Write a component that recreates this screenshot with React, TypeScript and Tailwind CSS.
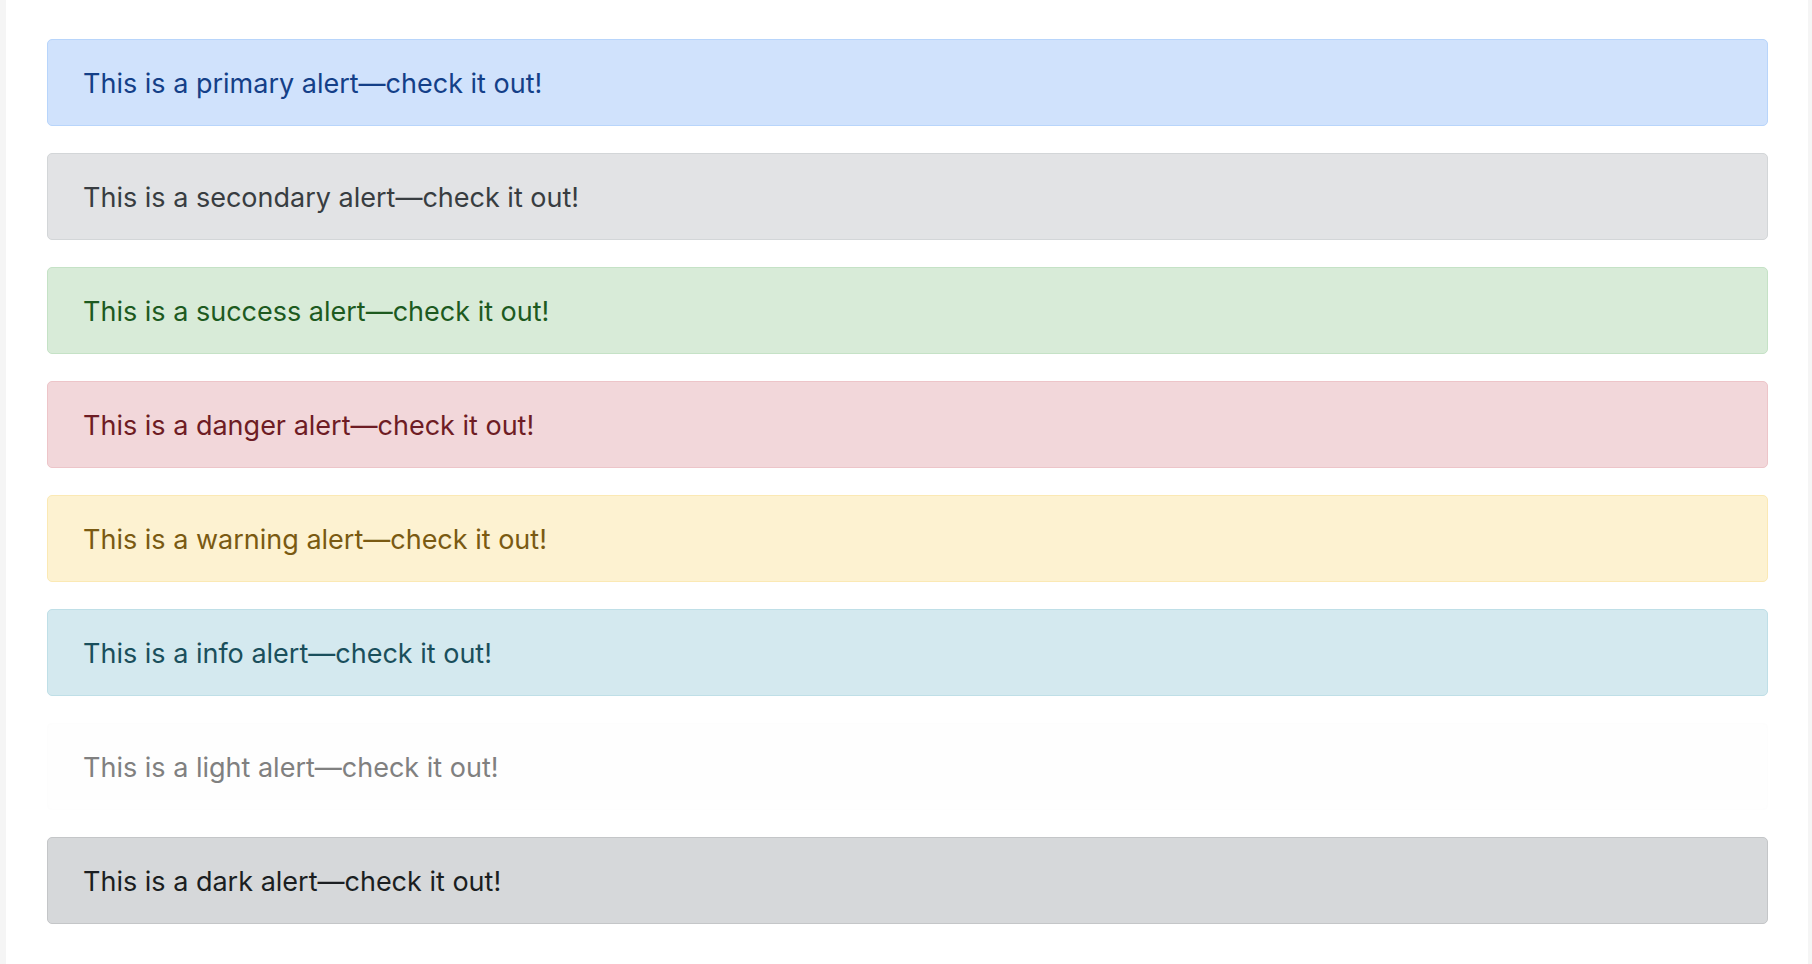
import React from "react";

const alerts = [
  { name: "primary", cls: "bg-[#d0e2fc] border-[#b8d5fb] text-[#143f88]" },
  { name: "secondary", cls: "bg-[#e2e3e5] border-[#d3d6d8] text-[#383d41]" },
  { name: "success", cls: "bg-[#d8ebd8] border-[#c5e2c6] text-[#1d5a1f]" },
  { name: "danger", cls: "bg-[#f2d7da] border-[#edc5c9] text-[#6e1c24]" },
  { name: "warning", cls: "bg-[#fdf2d1] border-[#fbe9b4] text-[#7a5a12]" },
  { name: "info", cls: "bg-[#d4e9ef] border-[#bfdfe7] text-[#1a4f5c]" },
  { name: "light", cls: "bg-[#fefefe] border-[#fdfdfd] text-[#808080]" },
  { name: "dark", cls: "bg-[#d6d8da] border-[#c4c6c8] text-[#1b1e21]" },
];

export default function App() {
  return (
    <div className="flex min-h-[964px] w-full bg-white" style={{ fontFamily: "Inter, 'Noto Sans', sans-serif" }}>
      <div className="w-[6px] shrink-0 bg-[#f5f5f5]" />
      <div className="flex-1 pl-[41px] pr-[40px] pt-[39px] flex flex-col gap-[27px]">
        {alerts.map((a) => (
          <div
            key={a.name}
            className={`border rounded-[5px] pl-[35px] pr-[36px] pt-[22px] pb-[20px] text-[27px] leading-[43px] ${a.cls}`}
          >
            This is a {a.name} alert—check it out!
          </div>
        ))}
      </div>
      <div className="w-[4px] shrink-0 bg-[#f5f5f5]" />
    </div>
  );
}
